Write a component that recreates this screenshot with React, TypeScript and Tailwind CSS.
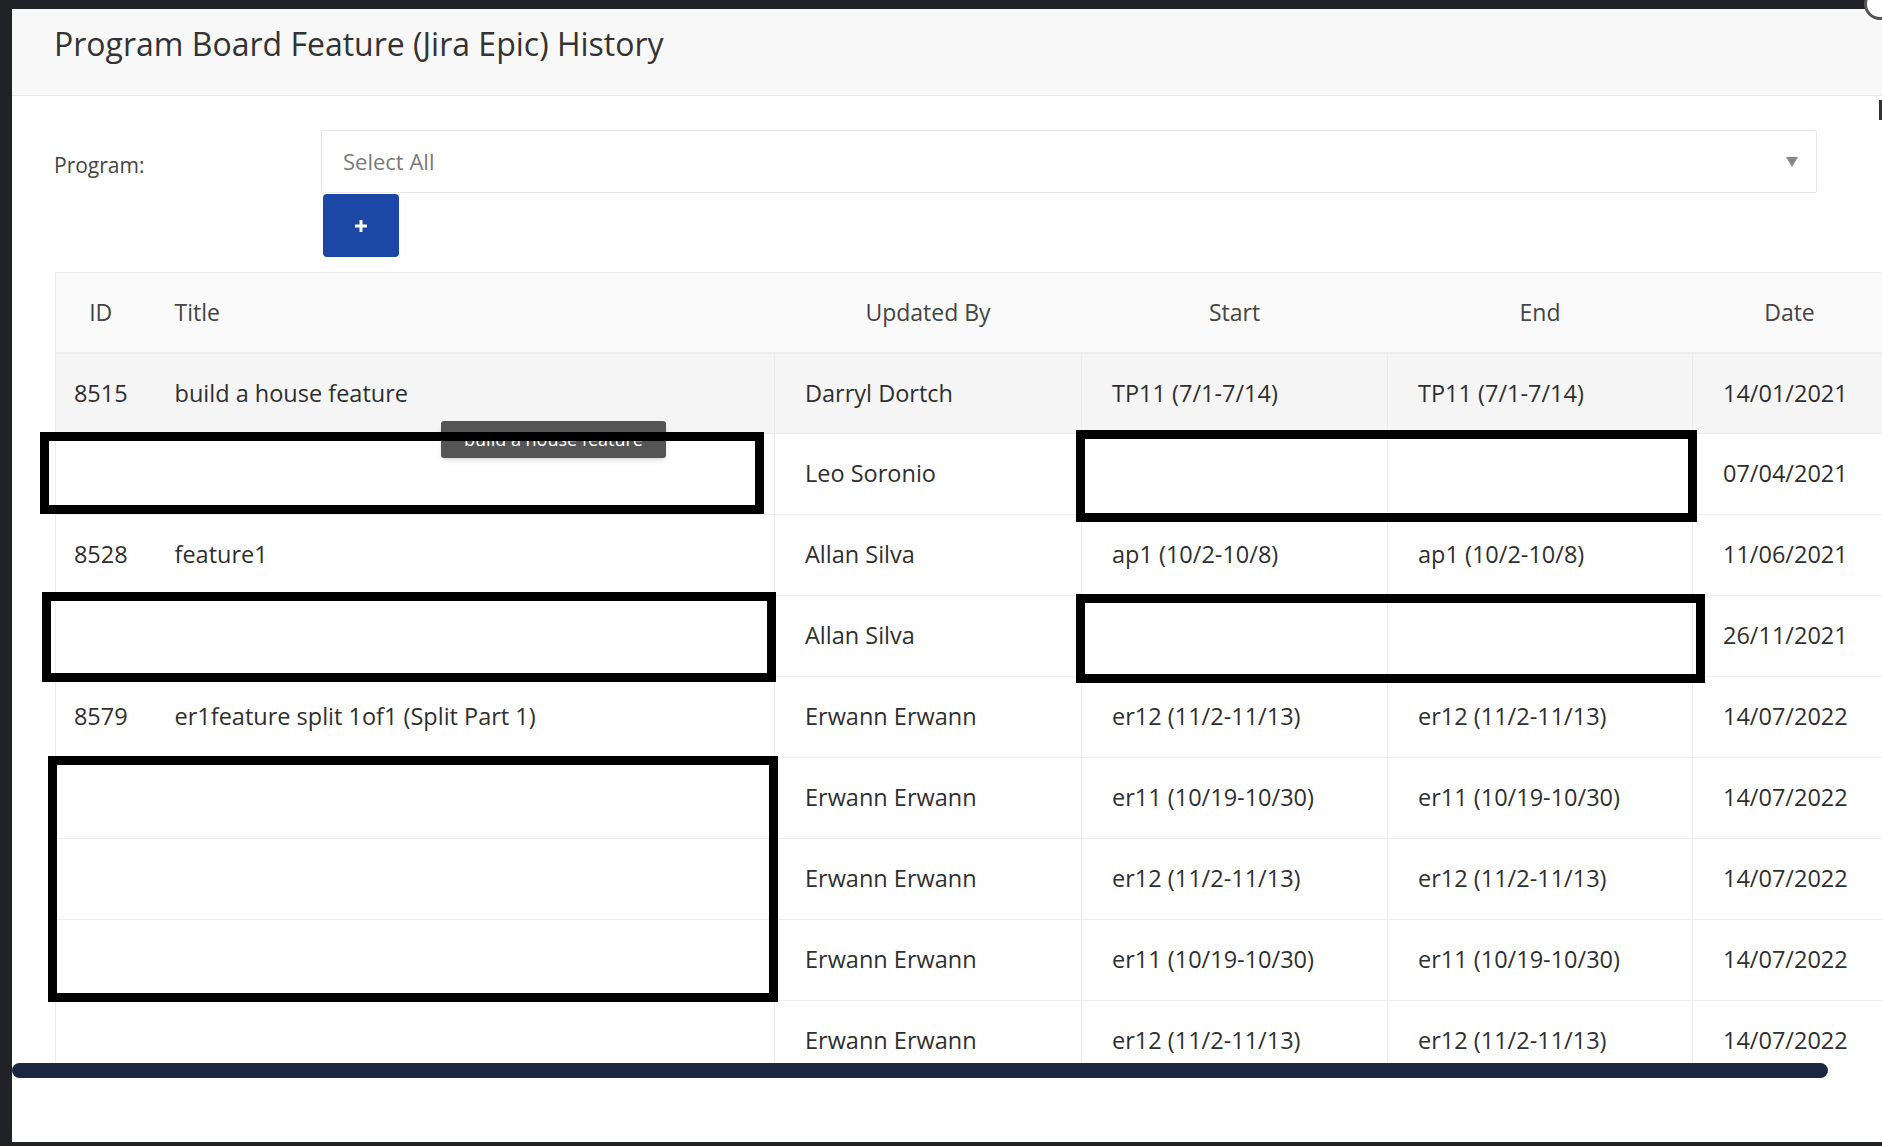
import React from 'react';

type Row = {
  id: string;
  title: string;
  by: string;
  start: string;
  end: string;
  date: string;
};

const rows: Row[] = [
  { id: '8515', title: 'build a house feature', by: 'Darryl Dortch', start: 'TP11 (7/1-7/14)', end: 'TP11 (7/1-7/14)', date: '14/01/2021' },
  { id: '', title: '', by: 'Leo Soronio', start: '', end: '', date: '07/04/2021' },
  { id: '8528', title: 'feature1', by: 'Allan Silva', start: 'ap1 (10/2-10/8)', end: 'ap1 (10/2-10/8)', date: '11/06/2021' },
  { id: '', title: '', by: 'Allan Silva', start: '', end: '', date: '26/11/2021' },
  { id: '8579', title: 'er1feature split 1of1 (Split Part 1)', by: 'Erwann Erwann', start: 'er12 (11/2-11/13)', end: 'er12 (11/2-11/13)', date: '14/07/2022' },
  { id: '', title: '', by: 'Erwann Erwann', start: 'er11 (10/19-10/30)', end: 'er11 (10/19-10/30)', date: '14/07/2022' },
  { id: '', title: '', by: 'Erwann Erwann', start: 'er12 (11/2-11/13)', end: 'er12 (11/2-11/13)', date: '14/07/2022' },
  { id: '', title: '', by: 'Erwann Erwann', start: 'er11 (10/19-10/30)', end: 'er11 (10/19-10/30)', date: '14/07/2022' },
  { id: '', title: '', by: 'Erwann Erwann', start: 'er12 (11/2-11/13)', end: 'er12 (11/2-11/13)', date: '14/07/2022' },
];

// black redaction boxes drawn over the screenshot
const boxes = [
  'left-[40px] top-[432px] w-[724px] h-[82px]',
  'left-[42px] top-[592px] w-[734px] h-[90px]',
  'left-[48px] top-[756px] w-[730px] h-[246px]',
  'left-[1076px] top-[430px] w-[621px] h-[92px]',
  'left-[1076px] top-[594px] w-[629px] h-[89px]',
];

export default function App() {
  return (
    <div
      className="relative w-[1882px] h-[1146px] overflow-hidden bg-[#202226] pt-[9px] pl-[12px] pb-[4px]"
      style={{ fontFamily: '"Open Sans", "Noto Sans", sans-serif' }}
    >
      <div className="h-full bg-white flex flex-col overflow-hidden">
        <div className="h-[87px] shrink-0 bg-[#f8f8f8] border-b border-[#e6e6e6] pl-[42px] pt-[14px]">
          <h1 className="text-[32px] leading-[42px] font-medium text-[#333]">Program Board Feature (Jira Epic) History</h1>
        </div>

        <div className="pl-[42px] pr-[65px] pt-[34px] flex">
          <label className="w-[267px] shrink-0 text-[21px] text-[#444] pt-[20px] leading-[30px]">Program:</label>
          <div className="flex-1">
            <div className="h-[63px] border border-[#e8e8e8] rounded-[2px] flex items-center justify-between pl-[21px] pr-[18px]">
              <span className="text-[22px] text-[#7a7a7a]">Select All</span>
              <svg width="12" height="10" viewBox="0 0 12 10">
                <path d="M0 0 L12 0 L6 10 Z" fill="#888" />
              </svg>
            </div>
            <button className="mt-[1px] ml-[2px] w-[76px] h-[63px] rounded-[4px] bg-[#1c47a6] flex items-center justify-center">
              <svg width="14" height="14" viewBox="0 0 14 14">
                <path d="M7 1 V13 M1 7 H13" stroke="white" strokeWidth="3" />
              </svg>
            </button>
          </div>
        </div>

        <div className="mt-[15px] h-[791px] shrink-0 overflow-hidden pl-[43px]">
          <table className="table-fixed border-collapse w-[1831px] border-l border-[#ececec] text-[23px]">
            <colgroup>
              <col className="w-[90px]" />
              <col className="w-[629px]" />
              <col className="w-[307px]" />
              <col className="w-[306px]" />
              <col className="w-[305px]" />
              <col className="w-[194px]" />
            </colgroup>
            <thead>
              <tr className="h-[80px] bg-[#fafafa] border-t border-b-2 border-[#ececec] text-[#444]">
                <th className="font-normal text-center">ID</th>
                <th className="font-normal text-left pl-[29px]">Title</th>
                <th className="font-normal text-center">Updated By</th>
                <th className="font-normal text-center">Start</th>
                <th className="font-normal text-center">End</th>
                <th className="font-normal text-center">Date</th>
              </tr>
            </thead>
            <tbody className="text-[#2f2f2f] font-medium text-[23.5px]">
              {rows.map((r, i) => (
                <tr key={i} className={`h-[81px] border-b border-[#ececec] ${i === 0 ? 'bg-[#f5f5f5]' : 'bg-white'}`}>
                  <td className="text-center">{r.id}</td>
                  <td className="pl-[29px]">{r.title}</td>
                  <td className="pl-[30px] border-l border-[#ececec]">{r.by}</td>
                  <td className="pl-[30px] border-l border-[#ececec]">{r.start}</td>
                  <td className="pl-[30px] border-l border-[#ececec]">{r.end}</td>
                  <td className="pl-[30px] border-l border-[#ececec]">{r.date}</td>
                </tr>
              ))}
            </tbody>
          </table>
        </div>

        <div className="h-[15px] w-[1816px] shrink-0 rounded-full bg-[#1c2841]" />
      </div>

      {/* tooltip under the redaction box */}
      <div className="absolute left-[441px] top-[421px] w-[225px] h-[37px] bg-[#555] rounded-[3px] shadow-md flex items-center justify-center text-white text-[18px]">
        build a house feature
      </div>

      {boxes.map((b, i) => (
        <div key={i} className={`absolute border-[9px] border-black ${b}`} />
      ))}

      {/* partial close button at the corner */}
      <div className="absolute left-[1864px] top-[-12px] w-[32px] h-[32px] rounded-full border-[3px] border-[#555] bg-white" />
      <div className="absolute left-[1879px] top-[100px] w-[3px] h-[20px] bg-[#333]" />
    </div>
  );
}
